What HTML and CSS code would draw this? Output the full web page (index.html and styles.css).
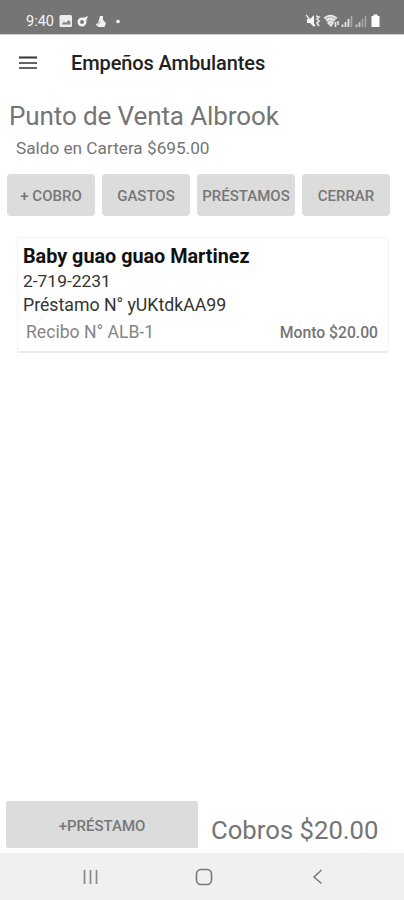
FILE: index.html
```html
<!DOCTYPE html>
<html lang="es">
<head>
<meta charset="utf-8">
<title>Empeños Ambulantes</title>
<link rel="stylesheet" href="styles.css">
</head>
<body>
<div class="screen">
  <header class="status">
    <span class="clock">9:40</span>
    <svg class="status-left" width="66" height="14" viewBox="0 0 66 14">
      <rect x="0.500" y="1" width="12.500" height="12" rx="1.500" fill="#ededed"/>
      <path d="M2.500 10.500l2.500-3 2 1.500 2.500-3 2 2v2.500z" fill="#858585"/>
      <circle cx="23" cy="8" r="3.200" fill="none" stroke="#f2f2f2" stroke-width="2.600"/>
      <path d="M24 4l5-2-2 5z" fill="#f2f2f2"/>
      <path d="M41 2h3v4l3 3-1.500 4h-6l-3-2.500L39 9l1-3z" fill="#f2f2f2"/>
      <path d="M39 10.500l2.500-3" stroke="#999" stroke-width="1"/>
      <circle cx="59" cy="7.500" r="1.800" fill="#fff"/>
    </svg>
    <svg class="status-right" width="76" height="14" viewBox="0 0 76 14">
      <path d="M1 5h3l4-4v12L4 9H1z" fill="#f5f5f5"/>
      <path d="M0 1l9 11" stroke="#f5f5f5" stroke-width="1.200"/>
      <path d="M10 2l3 1-2 2 2 2-2 2 2 3" fill="none" stroke="#e4e4e4" stroke-width="1.700"/>
      <path d="M18 4q6.500-5 13 0L25 12z" fill="#c4c4c4"/>
      <path d="M18 4q6.500-5 13 0M20 6.500q4.500-3.500 9 0M22 9q3-2 5 0l-2 3z" fill="none" stroke="#eee" stroke-width="1.300"/>
      <path d="M29.500 8v5M32 7v4" stroke="#e9e9e9" stroke-width="1.600"/>
      <path d="M36.500 10.500v2.500M39.500 8v5M42.500 5v8" stroke="#e5e5e5" stroke-width="1.800"/>
      <path d="M45.500 2v11M56.500 5v8M59.500 2v11" stroke="#aaa" stroke-width="1.600"/>
      <path d="M50.500 10.500v2.500M53.500 8v5" stroke="#c8c8c8" stroke-width="1.800"/>
      <path d="M65.500 2h2V0.500h4V2h2v11h-8z" fill="#fff"/>
    </svg>
  </header>
  <nav class="appbar">
    <svg class="menu" width="18" height="14" viewBox="0 0 18 14"><path d="M0 1.500h18" stroke="#333" stroke-width="2"/><path d="M0 7h18M0 12h18" stroke="#666" stroke-width="2"/></svg>
    <h1 class="app-title">Empeños Ambulantes</h1>
  </nav>
  <main class="content">
    <h2 class="branch">Punto de Venta Albrook</h2>
    <p class="balance">Saldo en Cartera $695.00</p>
    <div class="actions">
      <button class="btn btn-charge">+ COBRO</button>
      <button class="btn">GASTOS</button>
      <button class="btn">PRÉSTAMOS</button>
      <button class="btn">CERRAR</button>
    </div>
    <article class="card">
      <h3 class="name">Baby guao guao Martinez</h3>
      <p class="line doc">2-719-2231</p>
      <p class="line loan">Préstamo N° yUKtdkAA99</p>
      <div class="receipt-row">
        <span class="receipt">Recibo N° ALB-1</span>
        <span class="amount">Monto $20.00</span>
      </div>
    </article>
  </main>
  <footer class="summary">
    <button class="btn-loan">+PRÉSTAMO</button>
    <span class="total">Cobros $20.00</span>
  </footer>
  <div class="navbar">
    <svg width="16" height="16" viewBox="0 0 16 16"><path d="M2.500 1v14M8.500 1v14M14.500 1v14" stroke="#888" stroke-width="1.700"/></svg>
    <svg width="18" height="18" viewBox="0 0 18 18"><rect x="1.500" y="1.500" width="15" height="15" rx="4.500" fill="none" stroke="#777" stroke-width="1.600"/></svg>
    <svg width="16" height="16" viewBox="0 0 16 16"><path d="M11.500 1L4 8l7.500 6.500" fill="none" stroke="#777" stroke-width="1.500"/></svg>
  </div>
</div>
</body>
</html>
```
FILE: styles.css
```css
* { box-sizing: border-box; margin: 0; padding: 0; }
body { font-family: Roboto, sans-serif; background: #fff; color: #757575; }
.screen { width: 404px; height: 900px; display: flex; flex-direction: column; overflow: hidden; }
svg { display: block; flex: none; }
.status { height: 34px; background: #757575; display: flex; align-items: center; padding: 8px 22px 0 26px; flex: none; }
.clock { width: 33px; padding-top: 2px; font-size: 14.5px; line-height: 20px; color: #f2f2f2; white-space: nowrap; }
.status-right { margin-left: auto; }
.appbar { height: 58px; display: flex; align-items: center; padding: 0 0 2px 19px; flex: none; border-top: 1px solid #d0d0d0; }
.app-title { margin-left: 34px; font-size: 20px; line-height: 24px; font-weight: 500; letter-spacing: -0.1px; color: #222; white-space: nowrap; }
.content { flex: 1; }
.branch { margin: 8px 0 0 9px; font-size: 26px; line-height: 32px; font-weight: 400; letter-spacing: -0.1px; white-space: nowrap; }
.balance { margin: 6px 0 0 16px; font-size: 17.2px; line-height: 20px; }
.actions { display: grid; grid-template-columns: 88px 88px 98px 88px; gap: 7px; margin: 16px 0 0 7px; }
.btn, .btn-loan { border: 0; background: #dcdcdc; color: #777; font-family: inherit; font-weight: 500; font-size: 15px; white-space: nowrap; }
.btn { height: 42px; border-radius: 4px; padding-top: 1px; }
.btn-charge { padding-top: 2px; }
.card { width: 372px; height: 116px; margin: 21px 0 0 17px; padding: 7px 10px 0 5px; border: 1px solid #f3f3f3; border-bottom: 2px solid #ececec; border-radius: 2px; }
.name { font-size: 19.8px; line-height: 24px; font-weight: 700; color: #111; }
.line { font-size: 17.4px; line-height: 24px; color: #333; }
.loan { font-size: 17.7px; }
.receipt-row { display: flex; justify-content: space-between; align-items: center; padding-left: 3px; height: 29px; }
.receipt { font-size: 17.6px; color: #858585; }
.amount { padding-top: 2px; font-size: 15.7px; font-weight: 500; color: #757575; }
.summary { height: 52px; display: flex; align-items: flex-start; padding-left: 6px; flex: none; }
.btn-loan { width: 192px; height: 47px; border-radius: 2px; padding-top: 2px; }
.total { margin-left: 13px; font-size: 25.7px; line-height: 58px; white-space: nowrap; }
.navbar { height: 47px; background: #f0f0f0; display: flex; justify-content: space-between; align-items: center; padding: 0 78px 0 82px; flex: none; }
```
